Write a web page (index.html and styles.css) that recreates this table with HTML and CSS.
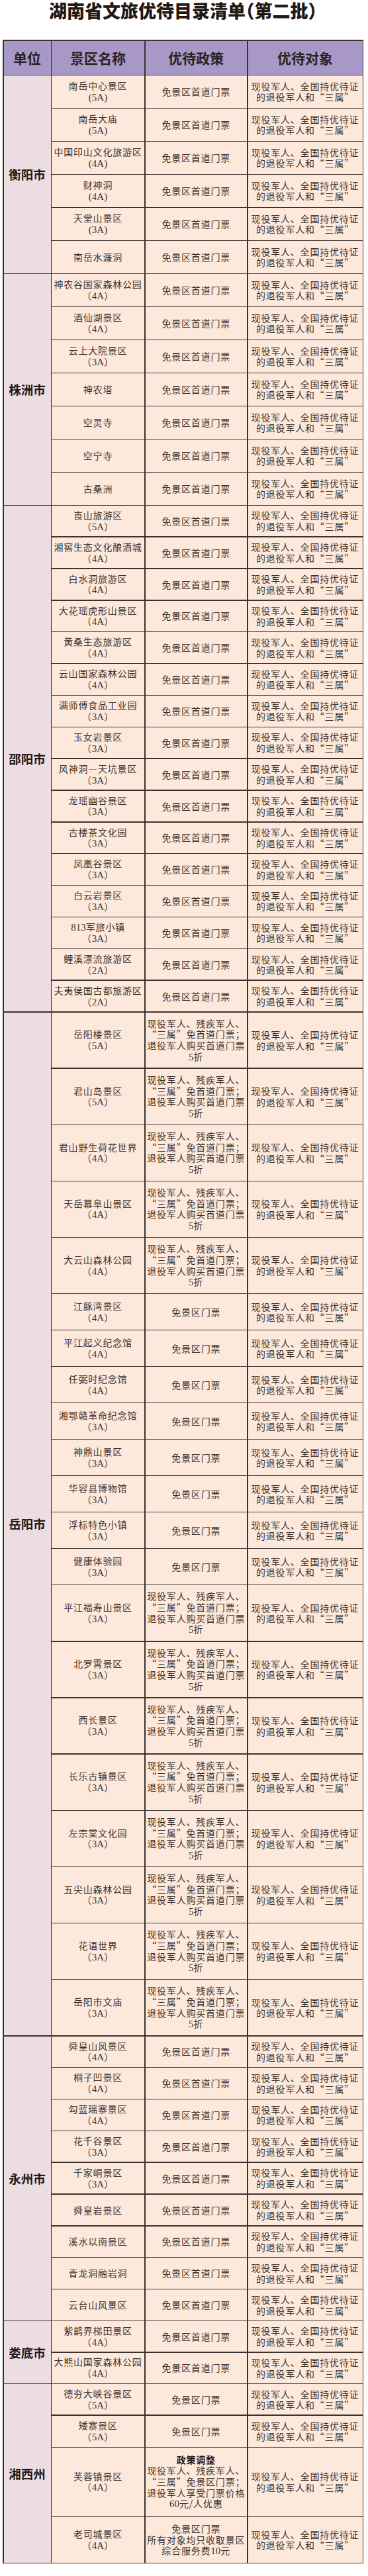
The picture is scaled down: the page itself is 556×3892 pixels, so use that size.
FILE: index.html
```html
<!DOCTYPE html>
<html lang="zh-CN">
<head>
<meta charset="utf-8">
<title>湖南省文旅优待目录清单（第二批）</title>
<link rel="stylesheet" href="styles.css">
</head>
<body>
<div class="page">
  <h1 class="title">湖南省文旅优待目录清单<span class="br">（</span>第二批<span class="br">）</span></h1>
  <div class="grid">
    <div class="hd">单位</div>
    <div class="hd">景区名称</div>
    <div class="hd">优待政策</div>
    <div class="hd">优待对象</div>

    <!-- 衡阳市 -->
    <div class="city" style="grid-row: span 6">衡阳市</div>
    <div class="c"><p>南岳中心景区<br><span class="g">(5A)</span></p></div><div class="c"><p>免景区首道门票</p></div><div class="c"><p>现役军人、全国持优待证<br>的退役军人和“三属”</p></div>
    <div class="c"><p>南岳大庙<br><span class="g">(5A)</span></p></div><div class="c"><p>免景区首道门票</p></div><div class="c"><p>现役军人、全国持优待证<br>的退役军人和“三属”</p></div>
    <div class="c"><p>中国印山文化旅游区<br><span class="g">(4A)</span></p></div><div class="c"><p>免景区首道门票</p></div><div class="c"><p>现役军人、全国持优待证<br>的退役军人和“三属”</p></div>
    <div class="c"><p>财神洞<br><span class="g">(4A)</span></p></div><div class="c"><p>免景区首道门票</p></div><div class="c"><p>现役军人、全国持优待证<br>的退役军人和“三属”</p></div>
    <div class="c"><p>天堂山景区<br><span class="g">(3A)</span></p></div><div class="c"><p>免景区首道门票</p></div><div class="c"><p>现役军人、全国持优待证<br>的退役军人和“三属”</p></div>
    <div class="c"><p>南岳水濂洞</p></div><div class="c"><p>免景区首道门票</p></div><div class="c"><p>现役军人、全国持优待证<br>的退役军人和“三属”</p></div>

    <!-- 株洲市 -->
    <div class="city" style="grid-row: span 7">株洲市</div>
    <div class="c"><p>神农谷国家森林公园<br>（<span class="g">4A</span>）</p></div><div class="c"><p>免景区首道门票</p></div><div class="c"><p>现役军人、全国持优待证<br>的退役军人和“三属”</p></div>
    <div class="c"><p>酒仙湖景区<br>（<span class="g">4A</span>）</p></div><div class="c"><p>免景区首道门票</p></div><div class="c"><p>现役军人、全国持优待证<br>的退役军人和“三属”</p></div>
    <div class="c"><p>云上大院景区<br>（<span class="g">3A</span>）</p></div><div class="c"><p>免景区首道门票</p></div><div class="c"><p>现役军人、全国持优待证<br>的退役军人和“三属”</p></div>
    <div class="c"><p>神农塔</p></div><div class="c"><p>免景区首道门票</p></div><div class="c"><p>现役军人、全国持优待证<br>的退役军人和“三属”</p></div>
    <div class="c"><p>空灵寺</p></div><div class="c"><p>免景区首道门票</p></div><div class="c"><p>现役军人、全国持优待证<br>的退役军人和“三属”</p></div>
    <div class="c"><p>空宁寺</p></div><div class="c"><p>免景区首道门票</p></div><div class="c"><p>现役军人、全国持优待证<br>的退役军人和“三属”</p></div>
    <div class="c"><p>古桑洲</p></div><div class="c"><p>免景区首道门票</p></div><div class="c"><p>现役军人、全国持优待证<br>的退役军人和“三属”</p></div>

    <!-- 邵阳市 -->
    <div class="city" style="grid-row: span 16">邵阳市</div>
    <div class="c"><p>崀山旅游区<br>（<span class="g">5A</span>）</p></div><div class="c"><p>免景区首道门票</p></div><div class="c"><p>现役军人、全国持优待证<br>的退役军人和“三属”</p></div>
    <div class="c"><p>湘窖生态文化酿酒城<br>（<span class="g">4A</span>）</p></div><div class="c"><p>免景区首道门票</p></div><div class="c"><p>现役军人、全国持优待证<br>的退役军人和“三属”</p></div>
    <div class="c"><p>白水洞旅游区<br>（<span class="g">4A</span>）</p></div><div class="c"><p>免景区首道门票</p></div><div class="c"><p>现役军人、全国持优待证<br>的退役军人和“三属”</p></div>
    <div class="c"><p>大花瑶虎形山景区<br>（<span class="g">4A</span>）</p></div><div class="c"><p>免景区首道门票</p></div><div class="c"><p>现役军人、全国持优待证<br>的退役军人和“三属”</p></div>
    <div class="c"><p>黄桑生态旅游区<br>（<span class="g">4A</span>）</p></div><div class="c"><p>免景区首道门票</p></div><div class="c"><p>现役军人、全国持优待证<br>的退役军人和“三属”</p></div>
    <div class="c"><p>云山国家森林公园<br>（<span class="g">4A</span>）</p></div><div class="c"><p>免景区首道门票</p></div><div class="c"><p>现役军人、全国持优待证<br>的退役军人和“三属”</p></div>
    <div class="c"><p>满师傅食品工业园<br>（<span class="g">3A</span>）</p></div><div class="c"><p>免景区首道门票</p></div><div class="c"><p>现役军人、全国持优待证<br>的退役军人和“三属”</p></div>
    <div class="c"><p>玉女岩景区<br>（<span class="g">3A</span>）</p></div><div class="c"><p>免景区首道门票</p></div><div class="c"><p>现役军人、全国持优待证<br>的退役军人和“三属”</p></div>
    <div class="c"><p>风神洞—天坑景区<br>（<span class="g">3A</span>）</p></div><div class="c"><p>免景区首道门票</p></div><div class="c"><p>现役军人、全国持优待证<br>的退役军人和“三属”</p></div>
    <div class="c"><p>龙瑶幽谷景区<br>（<span class="g">3A</span>）</p></div><div class="c"><p>免景区首道门票</p></div><div class="c"><p>现役军人、全国持优待证<br>的退役军人和“三属”</p></div>
    <div class="c"><p>古楼茶文化园<br>（<span class="g">3A</span>）</p></div><div class="c"><p>免景区首道门票</p></div><div class="c"><p>现役军人、全国持优待证<br>的退役军人和“三属”</p></div>
    <div class="c"><p>凤凰谷景区<br>（<span class="g">3A</span>）</p></div><div class="c"><p>免景区首道门票</p></div><div class="c"><p>现役军人、全国持优待证<br>的退役军人和“三属”</p></div>
    <div class="c"><p>白云岩景区<br>（<span class="g">3A</span>）</p></div><div class="c"><p>免景区首道门票</p></div><div class="c"><p>现役军人、全国持优待证<br>的退役军人和“三属”</p></div>
    <div class="c"><p><span class="g">813</span>军旅小镇<br>（<span class="g">3A</span>）</p></div><div class="c"><p>免景区首道门票</p></div><div class="c"><p>现役军人、全国持优待证<br>的退役军人和“三属”</p></div>
    <div class="c"><p>鲤溪漂流旅游区<br>（<span class="g">2A</span>）</p></div><div class="c"><p>免景区首道门票</p></div><div class="c"><p>现役军人、全国持优待证<br>的退役军人和“三属”</p></div>
    <div class="c"><p>夫夷侯国古都旅游区<br>（<span class="g">2A</span>）</p></div><div class="c"><p>免景区首道门票</p></div><div class="c"><p>现役军人、全国持优待证<br>的退役军人和“三属”</p></div>

    <!-- 岳阳市 -->
    <div class="city" style="grid-row: span 21">岳阳市</div>
    <div class="c"><p>岳阳楼景区<br>（<span class="g">5A</span>）</p></div><div class="c"><p>现役军人、残疾军人、<br>“三属”免首道门票；<br>退役军人购买首道门票<br><span class="g">5</span>折</p></div><div class="c"><p>现役军人、全国持优待证<br>的退役军人和“三属”</p></div>
    <div class="c"><p>君山岛景区<br>（<span class="g">5A</span>）</p></div><div class="c"><p>现役军人、残疾军人、<br>“三属”免首道门票；<br>退役军人购买首道门票<br><span class="g">5</span>折</p></div><div class="c"><p>现役军人、全国持优待证<br>的退役军人和“三属”</p></div>
    <div class="c"><p>君山野生荷花世界<br>（<span class="g">4A</span>）</p></div><div class="c"><p>现役军人、残疾军人、<br>“三属”免首道门票；<br>退役军人购买首道门票<br><span class="g">5</span>折</p></div><div class="c"><p>现役军人、全国持优待证<br>的退役军人和“三属”</p></div>
    <div class="c"><p>天岳幕阜山景区<br>（<span class="g">4A</span>）</p></div><div class="c"><p>现役军人、残疾军人、<br>“三属”免首道门票；<br>退役军人购买首道门票<br><span class="g">5</span>折</p></div><div class="c"><p>现役军人、全国持优待证<br>的退役军人和“三属”</p></div>
    <div class="c"><p>大云山森林公园<br>（<span class="g">4A</span>）</p></div><div class="c"><p>现役军人、残疾军人、<br>“三属”免首道门票；<br>退役军人购买首道门票<br><span class="g">5</span>折</p></div><div class="c"><p>现役军人、全国持优待证<br>的退役军人和“三属”</p></div>
    <div class="c"><p>江豚湾景区<br>（<span class="g">4A</span>）</p></div><div class="c"><p>免景区门票</p></div><div class="c"><p>现役军人、全国持优待证<br>的退役军人和“三属”</p></div>
    <div class="c"><p>平江起义纪念馆<br>（<span class="g">4A</span>）</p></div><div class="c"><p>免景区门票</p></div><div class="c"><p>现役军人、全国持优待证<br>的退役军人和“三属”</p></div>
    <div class="c"><p>任弼时纪念馆<br>（<span class="g">4A</span>）</p></div><div class="c"><p>免景区门票</p></div><div class="c"><p>现役军人、全国持优待证<br>的退役军人和“三属”</p></div>
    <div class="c"><p>湘鄂赣革命纪念馆<br>（<span class="g">3A</span>）</p></div><div class="c"><p>免景区门票</p></div><div class="c"><p>现役军人、全国持优待证<br>的退役军人和“三属”</p></div>
    <div class="c"><p>神鼎山景区<br>（<span class="g">3A</span>）</p></div><div class="c"><p>免景区门票</p></div><div class="c"><p>现役军人、全国持优待证<br>的退役军人和“三属”</p></div>
    <div class="c"><p>华容县博物馆<br>（<span class="g">3A</span>）</p></div><div class="c"><p>免景区门票</p></div><div class="c"><p>现役军人、全国持优待证<br>的退役军人和“三属”</p></div>
    <div class="c"><p>浮标特色小镇<br>（<span class="g">3A</span>）</p></div><div class="c"><p>免景区门票</p></div><div class="c"><p>现役军人、全国持优待证<br>的退役军人和“三属”</p></div>
    <div class="c"><p>健康体验园<br>（<span class="g">3A</span>）</p></div><div class="c"><p>免景区门票</p></div><div class="c"><p>现役军人、全国持优待证<br>的退役军人和“三属”</p></div>
    <div class="c"><p>平江福寿山景区<br>（<span class="g">3A</span>）</p></div><div class="c"><p>现役军人、残疾军人、<br>“三属”免首道门票；<br>退役军人购买首道门票<br><span class="g">5</span>折</p></div><div class="c"><p>现役军人、全国持优待证<br>的退役军人和“三属”</p></div>
    <div class="c"><p>北罗霄景区<br>（<span class="g">3A</span>）</p></div><div class="c"><p>现役军人、残疾军人、<br>“三属”免首道门票；<br>退役军人购买首道门票<br><span class="g">5</span>折</p></div><div class="c"><p>现役军人、全国持优待证<br>的退役军人和“三属”</p></div>
    <div class="c"><p>西长景区<br>（<span class="g">3A</span>）</p></div><div class="c"><p>现役军人、残疾军人、<br>“三属”免首道门票；<br>退役军人购买首道门票<br><span class="g">5</span>折</p></div><div class="c"><p>现役军人、全国持优待证<br>的退役军人和“三属”</p></div>
    <div class="c"><p>长乐古镇景区<br>（<span class="g">3A</span>）</p></div><div class="c"><p>现役军人、残疾军人、<br>“三属”免首道门票；<br>退役军人购买首道门票<br><span class="g">5</span>折</p></div><div class="c"><p>现役军人、全国持优待证<br>的退役军人和“三属”</p></div>
    <div class="c"><p>左宗棠文化园<br>（<span class="g">3A</span>）</p></div><div class="c"><p>现役军人、残疾军人、<br>“三属”免首道门票；<br>退役军人购买首道门票<br><span class="g">5</span>折</p></div><div class="c"><p>现役军人、全国持优待证<br>的退役军人和“三属”</p></div>
    <div class="c"><p>五尖山森林公园<br>（<span class="g">3A</span>）</p></div><div class="c"><p>现役军人、残疾军人、<br>“三属”免首道门票；<br>退役军人购买首道门票<br><span class="g">5</span>折</p></div><div class="c"><p>现役军人、全国持优待证<br>的退役军人和“三属”</p></div>
    <div class="c"><p>花语世界<br>（<span class="g">3A</span>）</p></div><div class="c"><p>现役军人、残疾军人、<br>“三属”免首道门票；<br>退役军人购买首道门票<br><span class="g">5</span>折</p></div><div class="c"><p>现役军人、全国持优待证<br>的退役军人和“三属”</p></div>
    <div class="c"><p>岳阳市文庙<br>（<span class="g">3A</span>）</p></div><div class="c"><p>现役军人、残疾军人、<br>“三属”免首道门票；<br>退役军人购买首道门票<br><span class="g">5</span>折</p></div><div class="c"><p>现役军人、全国持优待证<br>的退役军人和“三属”</p></div>

    <!-- 永州市 -->
    <div class="city" style="grid-row: span 9">永州市</div>
    <div class="c"><p>舜皇山风景区<br>（<span class="g">4A</span>）</p></div><div class="c"><p>免景区首道门票</p></div><div class="c"><p>现役军人、全国持优待证<br>的退役军人和“三属”</p></div>
    <div class="c"><p>桐子凹景区<br>（<span class="g">4A</span>）</p></div><div class="c"><p>免景区首道门票</p></div><div class="c"><p>现役军人、全国持优待证<br>的退役军人和“三属”</p></div>
    <div class="c"><p>勾蓝瑶寨景区<br>（<span class="g">4A</span>）</p></div><div class="c"><p>免景区首道门票</p></div><div class="c"><p>现役军人、全国持优待证<br>的退役军人和“三属”</p></div>
    <div class="c"><p>花千谷景区<br>（<span class="g">3A</span>）</p></div><div class="c"><p>免景区首道门票</p></div><div class="c"><p>现役军人、全国持优待证<br>的退役军人和“三属”</p></div>
    <div class="c"><p>千家峒景区<br>（<span class="g">3A</span>）</p></div><div class="c"><p>免景区首道门票</p></div><div class="c"><p>现役军人、全国持优待证<br>的退役军人和“三属”</p></div>
    <div class="c"><p>舜皇岩景区</p></div><div class="c"><p>免景区首道门票</p></div><div class="c"><p>现役军人、全国持优待证<br>的退役军人和“三属”</p></div>
    <div class="c"><p>溪水以南景区</p></div><div class="c"><p>免景区首道门票</p></div><div class="c"><p>现役军人、全国持优待证<br>的退役军人和“三属”</p></div>
    <div class="c"><p>青龙洞融岩洞</p></div><div class="c"><p>免景区首道门票</p></div><div class="c"><p>现役军人、全国持优待证<br>的退役军人和“三属”</p></div>
    <div class="c"><p>云台山风景区</p></div><div class="c"><p>免景区首道门票</p></div><div class="c"><p>现役军人、全国持优待证<br>的退役军人和“三属”</p></div>

    <!-- 娄底市 -->
    <div class="city" style="grid-row: span 2">娄底市</div>
    <div class="c"><p>紫鹊界梯田景区<br>（<span class="g">4A</span>）</p></div><div class="c"><p>免景区首道门票</p></div><div class="c"><p>现役军人、全国持优待证<br>的退役军人和“三属”</p></div>
    <div class="c"><p>大熊山国家森林公园<br>（<span class="g">4A</span>）</p></div><div class="c"><p>免景区首道门票</p></div><div class="c"><p>现役军人、全国持优待证<br>的退役军人和“三属”</p></div>

    <!-- 湘西州 -->
    <div class="city" style="grid-row: span 4">湘西州</div>
    <div class="c"><p>德夯大峡谷景区<br>（<span class="g">5A</span>）</p></div><div class="c"><p>免景区门票</p></div><div class="c"><p>现役军人、全国持优待证<br>的退役军人和“三属”</p></div>
    <div class="c"><p>矮寨景区<br>（<span class="g">5A</span>）</p></div><div class="c"><p>免景区门票</p></div><div class="c"><p>现役军人、全国持优待证<br>的退役军人和“三属”</p></div>
    <div class="c"><p>芙蓉镇景区<br>（<span class="g">4A</span>）</p></div><div class="c"><p><b class="adj">政策调整</b><br>现役军人、残疾军人、<br>“三属”免景区门票；<br>退役军人享受门票价格<br><span class="g">60</span>元/人优惠</p></div><div class="c"><p>现役军人、全国持优待证<br>的退役军人和“三属”</p></div>
    <div class="c"><p>老司城景区<br>（<span class="g">4A</span>）</p></div><div class="c"><p>免景区门票<br>所有对象均只收取景区<br>综合服务费<span class="g">10</span>元</p></div><div class="c"><p>现役军人、全国持优待证<br>的退役军人和“三属”</p></div>
  </div>
</div>
</body>
</html>
```

FILE: styles.css
```css
html, body {
  margin: 0;
  padding: 0;
  background: #ffffff;
}

body {
  width: 556px;
  min-height: 3892px;
  font-family: "Noto Sans CJK SC", sans-serif;
}

.page {
  width: 545px;
  margin-left: 4px;
}

.title {
  margin: 0;
  padding-bottom: 28px;
  height: 32px;
  line-height: 32px;
  font-size: 27px;
  font-weight: 900;
  color: #231815;
  text-align: center;
  white-space: nowrap;
}

.title .br {
  font-feature-settings: "halt";
}

.grid {
  display: grid;
  grid-template-columns: 71px 140px 153.5px 173px;
  grid-template-rows:
    51px
    repeat(13, 48.5px)
    repeat(16, 46.36px)
    repeat(5, 83.65px)
    repeat(8, 53.5px)
    repeat(8, 83.65px)
    repeat(9, 46.35px)
    46px 46px
    46.2px 46.8px 103.5px 68.5px;
  gap: 1.5px;
  padding: 1.5px;
  background: #3b3330;
}

.hd {
  background: #a898c8;
  color: #2b2220;
  font-size: 21px;
  font-weight: 700;
  display: flex;
  align-items: center;
  justify-content: center;
  white-space: nowrap;
}

.city {
  background: #ecdde2;
  color: #231a18;
  font-size: 18.5px;
  font-weight: 700;
  display: flex;
  align-items: center;
  justify-content: center;
  white-space: nowrap;
}

.c {
  background: #fce9dc;
  color: #3e332e;
  display: flex;
  align-items: center;
  justify-content: center;
}

.c p {
  margin: 0;
  font-size: 14px;
  letter-spacing: 0.8px;
  line-height: 16.7px;
  text-align: center;
  white-space: nowrap;
}

.g {
  font-family: "Liberation Serif", serif;
  font-size: 15px;
  letter-spacing: 0;
}

.adj {
  font-weight: 700;
  color: #231a18;
}
```
